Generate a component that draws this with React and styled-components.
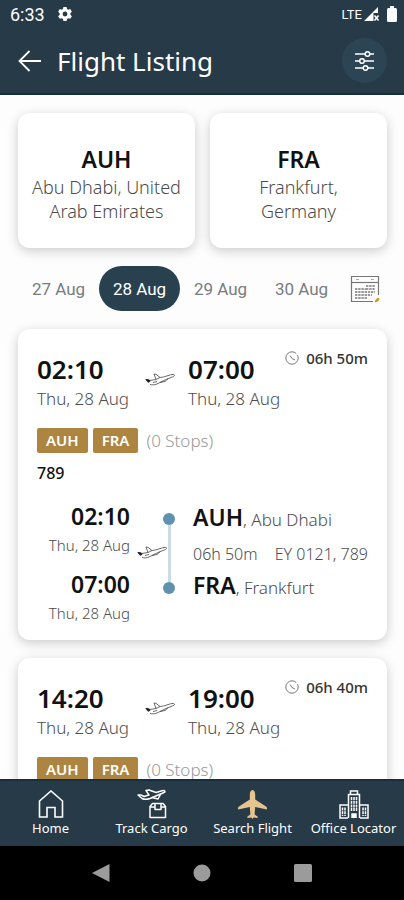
import React, { useState } from "react";
import styled, { createGlobalStyle, css } from "styled-components";

const THEME = {
  NAVY: "#263a47",
  PILL: "#29414f",
  GOLD: "#ad8440",
  SAND: "#e6c48f",
  BLUE: "#5f92ae",
  TEXT: "#111",
  LIGHT_TEXT: "#4c4c4c",
  FONT: "\"Noto Sans\", sans-serif",
  DATE_FONT: "Roboto, sans-serif",
};

const DATES = [ "27 Aug", "28 Aug", "29 Aug", "30 Aug" ];

const FLIGHTS = [
  {
    id: "EY 0121", departs: "02:10", arrives: "07:00", date: "Thu, 28 Aug",
    duration: "06h 50m", aircraft: "789",
  },
  {
    id: "EY 0123", departs: "14:20", arrives: "19:00", date: "Thu, 28 Aug",
    duration: "06h 40m", aircraft: "789",
  },
];

const GlobalStyle = createGlobalStyle`
* {
  box-sizing: border-box;
}
body {
  margin: 0;
  background: #fff;
  color: ${ THEME.TEXT };
  font-family: ${ THEME.FONT };
}
h1, h2, p {
  margin: 0;
}
button {
  padding: 0;
  border: 0;
  background: none;
  color: inherit;
  font: inherit;
  cursor: pointer;
}
`;

/* ---------- icons ---------- */

const GearIcon = () => (
  <svg width="16" height="16" viewBox="0 0 24 24" fill="#fff" aria-hidden="true">
    <path fillRule="evenodd" d="M9.6 1.5h4.8l.6 3 2 1.1 2.9-1 2.4 4.1-2.3 2v2.5l2.3 2-2.4 4.1-2.9-1-2 1.2-.6 3H9.6l-.6-3-2-1.2-2.9 1-2.4-4.1 2.3-2v-2.5l-2.3-2 2.400-4.100 2.900 1 2-1.100zM12 8.400a3.600 3.600 0 1 0 0 7.200 3.600 3.600 0 0 0 0-7.200z"/>
  </svg>
);

const SignalIcon = () => (
  <svg width="16" height="15" viewBox="0 0 16 15" aria-hidden="true">
    <path d="M0 14 14 0v6H9.500v8z" fill="#fff"/>
    <path d="m10.500 8.500 4 5m0-5-4 5" stroke="#fff" strokeWidth="1.500"/>
  </svg>
);

const BatteryIcon = () => (
  <svg width="10" height="16" viewBox="0 0 10 16" fill="#fff" aria-hidden="true">
    <path d="M3 0h4v2h1.500A1.500 1.500 0 0 1 10 3.500v11A1.500 1.500 0 0 1 8.500 16h-7A1.500 1.500 0 0 1 0 14.500v-11A1.500 1.500 0 0 1 1.500 2H3z"/>
  </svg>
);

const BackIcon = () => (
  <svg width="24" height="22" viewBox="0 0 24 22" fill="none" stroke="#fff" strokeWidth="1.800" aria-hidden="true">
    <path d="M23 11H2M11.500 1 1.500 11l10 10"/>
  </svg>
);

const FilterIcon = () => (
  <svg width="20" height="20" viewBox="0 0 20 20" fill="none" stroke="#fff" strokeWidth="1.500" aria-hidden="true">
    <path d="M0 3h10m5 0h4M0 10h4.500m5 0H19M0 17h8m5 0h6"/>
    <circle cx="12.500" cy="3" r="2.300"/>
    <circle cx="7" cy="10" r="2.300"/>
    <circle cx="10.500" cy="17" r="2.300"/>
  </svg>
);

const CalendarIcon = () => (
  <svg width="30" height="28" viewBox="0 0 30 28" fill="none" aria-hidden="true">
    <path d="M28.500 20V1.500h-27v25H23" stroke="#777" strokeWidth="1.200"/>
    <path d="M1.500 7.500h27" stroke="#777" strokeWidth="1.200"/>
    <path d="M6 4.500h3M21 4.500h3" stroke="#aaa"/>
    <path d="M16 11h9M16 14h9M5 14h11M5 17h20M5 20h17M5 23h12" stroke="#999" strokeWidth="2" strokeDasharray="2.400 .8"/>
    <path d="m24.500 27.500.8-2.500 2.700-2.500 1.500 1.500-1.500 2.500z" fill="#c99a1c"/>
  </svg>
);

const ClockIcon = () => (
  <svg width="14" height="14" viewBox="0 0 14 14" fill="none" stroke="#777" aria-hidden="true">
    <circle cx="7" cy="7" r="6.200" strokeDasharray="33 2"/>
    <path d="M5 4.500 7 7.500l3 1.500"/>
  </svg>
);

// Take-off plane, outline only
const PlaneIcon = () => (
  <svg width="30" height="13" viewBox="0 0 30 13" fill="none" stroke="#444"
       strokeWidth="0.8" strokeLinejoin="round" aria-hidden="true">
    <path d="M1 6.500 4.500 7.500l6.500-1L9 1l2 .3 4 3.200 3.500-.5 7-2.200c2-.5 4-.5 4 .5 0 .8-1.500 1.500-3.500 2.200L21 6.500 12 11c-2.500 1-5 1.200-7 .3"/>
    <path d="m11 6.500 4-2M15 9.500l5-1 3-2.700M8 9.500l4-1"/>
    <path d="M.8 6.300 4.500 7l.5 1.500-2 .8z" fill="#222" stroke="#222"/>
  </svg>
);

const HomeIcon = () => (
  <svg width="26" height="28" viewBox="0 0 26 28" fill="none" stroke="#fff" strokeWidth="1.600" aria-hidden="true">
    <path d="M1.500 27V11L13 1l11.500 10v16h-7.500V17.500H9V27z"/>
  </svg>
);

const CargoIcon = () => (
  <svg width="30" height="30" viewBox="0 0 30 30" fill="none" stroke="#fff" strokeWidth="1.500" strokeLinejoin="round" aria-hidden="true">
    <path d="M1 6 4 6l3 1.500L12 6 9 1.500l3-.5 7 2.500 6-1.700c3-.8 4 1 1.500 2L13 9.500c-3 1-6 1-8 0z"/>
    <path d="m15 8.500 6 1.500 2.500-4.500"/>
    <path d="M13 17.500v11h15.500v-11L26 14.500H15.500zM13 18h5m6 0h4.500M18 15v5.500h6V15"/>
  </svg>
);

const SearchPlaneIcon = () => (
  <svg width="29" height="29" viewBox="0 0 29 29" fill={ THEME.SAND } aria-hidden="true">
    <path d="M14.500 0c1.800 0 2.700 2.300 2.700 5v4.500L28 16.500c1 .7 1 1.500 1 3l-11.800-2.500-.6 7.500 3 2v1.500l-4-.6-1.100 1.600-1.100-1.600-4 .6v-1.500l3-2-.6-7.500L0 19.500c0-1.500 0-2.300 1-3l10.800-7V5c0-2.700.9-5 2.700-5z"/>
  </svg>
);

const OfficeIcon = () => (
  <svg width="30" height="29" viewBox="0 0 30 29" fill="none" stroke="#fff" strokeWidth="1.500" aria-hidden="true">
    <path d="M9.500 28V4.500h11V28M11.500 4V1h7v3M9 28H1V15h8M21 15h8v13h-8"/>
    <path d="M12.500 7v14m2.500-14v14m2.500-14v14M3.500 17.500V26m2.500-8.500V26m18-8.500V26m2.500-8.500V26" strokeDasharray="3 .7"/>
    <path d="M13 28v-4h4v4" fill="#fff"/>
  </svg>
);

const NAV_ITEMS = [
  { label: "Home", href: "#home", Icon: HomeIcon },
  { label: "Track Cargo", href: "#track", Icon: CargoIcon },
  { label: "Search Flight", href: "#search", Icon: SearchPlaneIcon },
  { label: "Office Locator", href: "#offices", Icon: OfficeIcon },
];

/* ---------- components ---------- */

/**
 * FlightCard
 * @component
 * @example return (<FlightCard flight={ flight } />)
 */
const FlightCard = ( { flight } ) => {
  const { id, departs, arrives, date, duration, aircraft } = flight;
  
  return ( <Card>
    <Summary>
      <Stop>
        <Time>{ departs }</Time>
        <Day>{ date }</Day>
      </Stop>
      <SummaryPlane><PlaneIcon/></SummaryPlane>
      <Stop>
        <Time>{ arrives }</Time>
        <Day>{ date }</Day>
      </Stop>
      <Duration><ClockIcon/>{ duration }</Duration>
    </Summary>
    <Route>
      <Badge>AUH</Badge>
      <Badge>FRA</Badge>
      <Stops>(0 Stops)</Stops>
    </Route>
    <Aircraft>{ aircraft }</Aircraft>
    <Leg>
      <LegTimes>
        <Time $small>{ departs }</Time>
        <Day $small>{ date }</Day>
        <Time $small>{ arrives }</Time>
        <Day $small>{ date }</Day>
      </LegTimes>
      <LegPlane><PlaneIcon/></LegPlane>
      <Rail><Dot/><Line/><Dot/></Rail>
      <LegPlaces>
        <Place><Code>AUH</Code>, Abu Dhabi</Place>
        <LegInfo><span>{ duration }</span><span>{ id }, { aircraft }</span></LegInfo>
        <Place><Code>FRA</Code>, Frankfurt</Place>
      </LegPlaces>
    </Leg>
  </Card> );
};

const App = () => {
  const [ selected, setSelected ] = useState( "28 Aug" );
  
  return ( <Screen>
    <GlobalStyle/>
    <StatusBar>
      <Clock>6:33</Clock>
      <GearIcon/>
      <Network>LTE</Network>
      <SignalIcon/>
      <BatteryIcon/>
    </StatusBar>
    <Header>
      <BackButton aria-label="Back"><BackIcon/></BackButton>
      <Title>Flight Listing</Title>
      <FilterButton aria-label="Filter"><FilterIcon/></FilterButton>
    </Header>
    <Content>
      <Airports>
        <AirportCard>
          <AirportCode>AUH</AirportCode>
          <City>Abu Dhabi, United Arab Emirates</City>
        </AirportCard>
        <AirportCard>
          <AirportCode>FRA</AirportCode>
          <City>Frankfurt,<br/>Germany</City>
        </AirportCard>
      </Airports>
      <DateBar>
        { DATES.map( ( date ) => (
          <DateButton key={ date } $active={ date === selected }
                      aria-pressed={ date === selected }
                      onClick={ () => setSelected( date ) }>{ date }</DateButton>
        ) ) }
        <CalendarButton aria-label="Pick a date"><CalendarIcon/></CalendarButton>
      </DateBar>
      <FlightList>
        { FLIGHTS.map( ( flight ) => <FlightCard key={ flight.id } flight={ flight }/> ) }
      </FlightList>
    </Content>
    <NavBar>
      { NAV_ITEMS.map( ( { label, href, Icon } ) => (
        <NavLink key={ label } href={ href }><NavIcon><Icon/></NavIcon>{ label }</NavLink>
      ) ) }
    </NavBar>
    <SystemBar>
      <SystemButton aria-label="System back">
        <svg width="18" height="20" viewBox="0 0 18 20"><path d="M17.500 1v18L0 10z" fill="#9b9b9b"/></svg>
      </SystemButton>
      <SystemButton aria-label="System home">
        <svg width="18" height="18" viewBox="0 0 18 18"><circle cx="9" cy="9" r="8.500" fill="#9b9b9b"/></svg>
      </SystemButton>
      <SystemButton aria-label="Recent apps">
        <svg width="18" height="18" viewBox="0 0 18 18"><rect width="18" height="18" rx="1.500" fill="#9b9b9b"/></svg>
      </SystemButton>
    </SystemBar>
  </Screen> );
};

/* ---------- styles ---------- */

const Screen = styled.div`
display: flex;
flex-direction: column;
height: 100vh;
overflow: hidden;
`;

const StatusBar = styled.div`
display: flex;
flex: none;
align-items: center;
height: 28px;
padding: 0 7px 0 10px;
background: ${ THEME.NAVY };
color: #fff;
font-family: ${ THEME.DATE_FONT };
`;

const Clock = styled.span`
margin-right: 12px;
font-size: 18px;
`;

const Network = styled.span`
margin: 0 2px 0 auto;
font-size: 13px;

& + svg {
  margin-right: 7px;
}
`;

const Header = styled.header`
display: flex;
flex: none;
align-items: center;
height: 67px;
padding: 0 17px 0 18px;
border-bottom: 2px solid #16303f;
background: ${ THEME.NAVY };
color: #fff;
`;

const BackButton = styled.button`
display: flex;
margin-right: 15px;
`;

const Title = styled.h1`
font-size: 26px;
font-weight: 400;
line-height: 36px;
`;

const FilterButton = styled.button`
display: flex;
align-items: center;
justify-content: center;
width: 45px;
height: 45px;
margin-left: auto;
border-radius: 50%;
background: #2c4554;
`;

const Content = styled.main`
flex: 1;
min-height: 0;
overflow-y: auto;
scrollbar-width: none;
padding: 18px 17px 18px 18px;
background: #fdfdfd;
`;

const cardStyle = css`
border-radius: 12px;
background: #fff;
box-shadow: 0 3px 12px rgba(0, 0, 0, 0.2);
`;

const Airports = styled.section`
display: grid;
grid-template-columns: 1fr 1fr;
gap: 15px;
`;

const AirportCard = styled.div`
${ cardStyle };
display: flex;
flex-direction: column;
align-items: center;
padding: 30px 8px 25px;
text-align: center;
`;

const AirportCode = styled.h2`
font-size: 23px;
font-weight: 600;
line-height: 32px;
`;

const City = styled.p`
color: ${ THEME.LIGHT_TEXT };
font-size: 18px;
font-weight: 300;
line-height: 24px;
`;

const DateBar = styled.div`
display: grid;
grid-template-columns: repeat(4, 1fr) 45px;
align-items: center;
margin: 18px 0;
`;

const DateButton = styled.button`
height: 45px;
border-radius: 23px;
color: #777c80;
font-family: ${ THEME.DATE_FONT };
font-size: 17px;
${ ( { $active } ) => $active && css`
background: ${ THEME.PILL };
color: #fff;
` };
`;

const CalendarButton = styled.button`
display: flex;
justify-content: center;
`;

const FlightList = styled.section`
display: flex;
flex-direction: column;
gap: 18px;
`;

const Card = styled.article`
${ cardStyle };
padding: 19px 19px 14px;
`;

const Summary = styled.div`
display: flex;
align-items: flex-start;
`;

const Stop = styled.div`
margin-top: 5px;
`;

const Time = styled.div`
font-size: ${ ( { $small } ) => $small ? 23 : 26 }px;
font-weight: 600;
line-height: 32px;
`;

const Day = styled.div`
color: ${ THEME.LIGHT_TEXT };
font-size: ${ ( { $small } ) => $small ? 15 : 17 }px;
font-weight: 300;
line-height: ${ ( { $small } ) => $small ? 26 : 28 }px;
white-space: nowrap;
`;

const SummaryPlane = styled.div`
display: flex;
margin: 25px 13px 0 16px;
`;

const Duration = styled.div`
display: flex;
align-items: center;
gap: 7px;
margin-left: auto;
color: #333;
font-size: 15px;
font-weight: 500;
line-height: 20px;
white-space: nowrap;
`;

const Route = styled.div`
display: flex;
align-items: center;
gap: 5px;
margin-top: 15px;
`;

const Badge = styled.span`
padding: 0 9px;
border-radius: 2px;
background: ${ THEME.GOLD };
color: #fff;
font-size: 15px;
font-weight: 600;
line-height: 25px;
`;

const Stops = styled.span`
margin-left: 3px;
color: #999;
font-size: 17px;
font-weight: 300;
line-height: 25px;
`;

const Aircraft = styled.p`
margin-top: 8px;
font-size: 16px;
font-weight: 500;
line-height: 24px;
`;

const Leg = styled.div`
display: flex;
margin-top: 15px;
`;

const LegTimes = styled.div`
width: 93px;
text-align: right;

${ Day } + ${ Time } {
  margin-top: 10px;
}
`;

const LegPlane = styled.div`
display: flex;
margin: 46px -4px 0 7px;
`;

const Rail = styled.div`
display: flex;
flex-direction: column;
align-items: center;
height: 94px;
padding-top: 13px;
`;

const Dot = styled.span`
width: 12px;
height: 12px;
border-radius: 50%;
background: ${ THEME.BLUE };
`;

const Line = styled.span`
flex: 1;
width: 3px;
background: #cddbe4;
`;

const LegPlaces = styled.div`
flex: 1;
margin-left: 18px;
padding-top: 4px;
white-space: nowrap;
`;

const Place = styled.div`
color: ${ THEME.LIGHT_TEXT };
font-size: 17px;
font-weight: 300;
line-height: 32px;
`;

const Code = styled.strong`
color: ${ THEME.TEXT };
font-size: 23px;
font-weight: 600;
line-height: 24px;
`;

const LegInfo = styled.div`
display: flex;
justify-content: space-between;
color: ${ THEME.LIGHT_TEXT };
font-size: 16px;
font-weight: 300;
line-height: 36px;
`;

const NavBar = styled.nav`
display: grid;
flex: none;
grid-template-columns: repeat(4, 1fr);
padding: 8px 0 9px;
border-top: 2px solid #16303f;
background: ${ THEME.NAVY };
`;

const NavLink = styled.a`
display: flex;
flex-direction: column;
align-items: center;
color: #fff;
font-size: 13px;
line-height: 18px;
text-decoration: none;
white-space: nowrap;
`;

const NavIcon = styled.span`
display: flex;
align-items: center;
height: 30px;
`;

const SystemBar = styled.div`
display: grid;
flex: none;
grid-template-columns: repeat(3, 25%);
justify-content: center;
height: 54px;
background: #000;
`;

const SystemButton = styled.button`
display: flex;
align-items: center;
justify-content: center;
`;

export default App;
